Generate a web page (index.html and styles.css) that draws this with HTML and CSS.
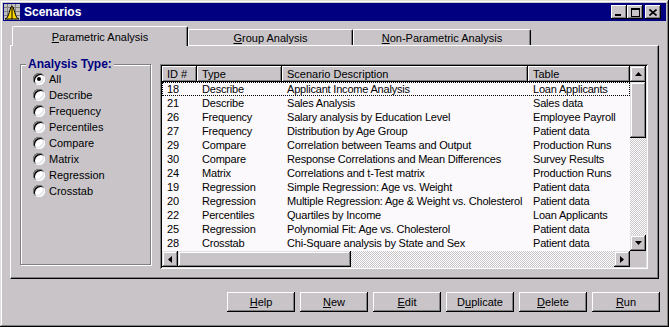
FILE: index.html
```html
<!DOCTYPE html>
<html lang="en">
<head>
    <meta charset="UTF-8">
    <title>Scenarios</title>
    <link rel="stylesheet" href="styles.css">
</head>
<body>
    <div class="window">
        <div class="titlebar">
            <svg class="app-icon" width="16" height="16" viewBox="0 0 16 16">
                <rect x="0" y="0" width="16" height="16" fill="#c0c0c0"/>
                <path d="M0 3.5h16M0 7.5h16M0 11.5h16M3.5 0v16M7.5 0v16M11.5 0v16" stroke="#808080" stroke-width="1"/>
                <path d="M1 15 C5 15 6 2 8 2 C10 2 11 15 15 15 Z" fill="#ffd800" stroke="#000" stroke-width="1"/>
                <path d="M8 3v12" stroke="#000"/>
            </svg>
            <span class="title">Scenarios</span>
            <div class="controls">
                <span class="ctl"><svg width="8" height="7" viewBox="0 0 8 7"><rect x="0" y="5" width="6" height="2" fill="#000"/></svg></span>
                <span class="ctl"><svg width="9" height="9" viewBox="0 0 9 9"><rect x="0.5" y="0.5" width="8" height="8" fill="none" stroke="#000"/><rect x="0" y="0" width="9" height="2" fill="#000"/></svg></span>
                <span class="ctl close"><svg width="8" height="7" viewBox="0 0 8 7"><path d="M0.5 0.5l7 6M7.5 0.5l-7 6" stroke="#000" stroke-width="1.6"/></svg></span>
            </div>
        </div>

        <div class="tabs">
            <div class="tab active"><span><u>P</u>arametric Analysis</span></div>
            <div class="tab tab-group"><span><u>G</u>roup Analysis</span></div>
            <div class="tab tab-non"><span><u>N</u>on-Parametric Analysis</span></div>
        </div>

        <div class="panel">
            <fieldset class="types">
                <legend>Analysis Type:</legend>
                <label class="opt"><span class="radio checked"></span>All</label>
                <label class="opt"><span class="radio"></span>Describe</label>
                <label class="opt"><span class="radio"></span>Frequency</label>
                <label class="opt"><span class="radio"></span>Percentiles</label>
                <label class="opt"><span class="radio"></span>Compare</label>
                <label class="opt"><span class="radio"></span>Matrix</label>
                <label class="opt"><span class="radio"></span>Regression</label>
                <label class="opt"><span class="radio"></span>Crosstab</label>
            </fieldset>

            <div class="listbox">
                <div class="list-main">
                    <div class="row head">
                        <div class="cell hd">ID #</div>
                        <div class="cell hd">Type</div>
                        <div class="cell hd">Scenario Description</div>
                        <div class="cell hd">Table</div>
                    </div>
                    <div id="rows"></div>
                </div>
                <div class="vscroll">
                    <span class="sbtn"><svg width="7" height="4" viewBox="0 0 7 4"><path d="M3.5 0L7 4H0Z" fill="#000"/></svg></span>
                    <span class="vthumb"></span>
                    <span class="track"></span>
                    <span class="sbtn"><svg width="7" height="4" viewBox="0 0 7 4"><path d="M0 0H7L3.5 4Z" fill="#000"/></svg></span>
                </div>
                <div class="hscroll">
                    <span class="sbtn"><svg width="4" height="7" viewBox="0 0 4 7"><path d="M0 3.5L4 0V7Z" fill="#000"/></svg></span>
                    <span class="hthumb"></span>
                    <span class="track"></span>
                    <span class="sbtn"><svg width="4" height="7" viewBox="0 0 4 7"><path d="M0 0L4 3.5L0 7Z" fill="#000"/></svg></span>
                </div>
                <div class="corner"></div>
            </div>
        </div>

        <div class="buttons">
            <button><u>H</u>elp</button>
            <button><u>N</u>ew</button>
            <button><u>E</u>dit</button>
            <button>D<u>u</u>plicate</button>
            <button><u>D</u>elete</button>
            <button><u>R</u>un</button>
        </div>
    </div>

    <script>
        let scenarios = [
            [18, 'Describe', 'Applicant Income Analysis', 'Loan Applicants'],
            [21, 'Describe', 'Sales Analysis', 'Sales data'],
            [26, 'Frequency', 'Salary analysis by Education Level', 'Employee Payroll'],
            [27, 'Frequency', 'Distribution by Age Group', 'Patient data'],
            [29, 'Compare', 'Correlation between Teams and Output', 'Production Runs'],
            [30, 'Compare', 'Response Correlations and Mean Differences', 'Survey Results'],
            [24, 'Matrix', 'Correlations and t-Test matrix', 'Production Runs'],
            [19, 'Regression', 'Simple Regression: Age vs. Weight', 'Patient data'],
            [20, 'Regression', 'Multiple Regression: Age & Weight vs. Cholesterol', 'Patient data'],
            [22, 'Percentiles', 'Quartiles by Income', 'Loan Applicants'],
            [25, 'Regression', 'Polynomial Fit: Age vs. Cholesterol', 'Patient data'],
            [28, 'Crosstab', 'Chi-Square analysis by State and Sex', 'Patient data']
        ];

        let rows = document.getElementById('rows');
        for (let i = 0; i < scenarios.length; i++) {
            let row = document.createElement('div');
            row.className = i === 0 ? 'row focus' : 'row';
            for (let j = 0; j < 4; j++) {
                let cell = document.createElement('div');
                cell.className = 'cell';
                cell.innerText = scenarios[i][j];
                row.appendChild(cell);
            }
            rows.appendChild(row);
        }
    </script>
</body>
</html>
```

FILE: styles.css
```css
body {
    margin: 0;
    background: #c8c4c8;
    font-family: "Liberation Sans", Arial, sans-serif;
    font-size: 11px;
    color: #000;
}
.window {
    width: 669px;
    height: 327px;
    box-sizing: border-box;
    padding: 3px;
    background: #c8c4c8;
    box-shadow: inset -1px -1px #000, inset 1px 1px #dfdfdf, inset -2px -2px #808080, inset 2px 2px #fff;
}
.titlebar {
    height: 18px;
    background: #000080;
    display: flex;
    align-items: center;
    padding-left: 1px;
}
.app-icon {
    margin-right: 4px;
}
.title {
    color: #fff;
    font-weight: bold;
    font-size: 12px;
}
.controls {
    margin-left: auto;
    display: flex;
    margin-right: 5px;
}
.ctl {
    width: 16px;
    height: 14px;
    box-sizing: border-box;
    background: #c8c4c8;
    box-shadow: inset -1px -1px #000, inset 1px 1px #fff, inset -2px -2px #808080;
    display: flex;
    align-items: center;
    justify-content: center;
}
.ctl.close {
    margin-left: 2px;
}
.tabs {
    display: flex;
    align-items: flex-end;
    height: 19px;
    margin: 5px 0 0 9px;
    position: relative;
    z-index: 1;
}
.tab {
    height: 16px;
    box-sizing: border-box;
    border-left: 1px solid #fff;
    border-top: 1px solid #fff;
    border-right: 1px solid #000;
    border-radius: 2px 2px 0 0;
    box-shadow: inset -1px 0 #808080;
    display: flex;
    align-items: center;
    justify-content: center;
    width: 165px;
}
.tab.active {
    width: 176px;
    height: 20px;
    margin-bottom: -1px;
    background: #c8c4c8;
}
.tab-non {
    width: 178px;
}
.panel {
    margin-left: 7px;
    width: 649px;
    height: 234px;
    box-sizing: border-box;
    border-left: 1px solid #fff;
    border-top: 1px solid #fff;
    border-right: 1px solid #000;
    border-bottom: 1px solid #000;
    box-shadow: inset -1px -1px #808080;
    display: flex;
    align-items: flex-start;
    padding: 12px 0 0 9px;
}
.types {
    margin: 0;
    width: 131px;
    height: 207px;
    box-sizing: border-box;
    border: 1px solid #808080;
    box-shadow: inset 1px 1px #fff, 1px 1px #fff;
    padding: 0 0 0 12px;
    display: flex;
    flex-direction: column;
}
.types legend {
    color: #000080;
    font-weight: bold;
    font-size: 12px;
    line-height: 13px;
    padding: 0 2px;
    margin-left: -7px;
    background: #c8c4c8;
}
.opt {
    display: flex;
    align-items: center;
    height: 16px;
    font-size: 11px;
}
.radio {
    width: 12px;
    height: 12px;
    border-radius: 50%;
    background: #fff;
    box-shadow: inset 1px 1px #808080, inset -1px -1px #fff, inset 2px 2px #000, inset -2px -2px #dfdfdf;
    margin-right: 4px;
    display: flex;
    align-items: center;
    justify-content: center;
}
.radio.checked::after {
    content: "";
    width: 4px;
    height: 4px;
    border-radius: 50%;
    background: #000;
}
.listbox {
    margin: 6px 0 0 9px;
    width: 488px;
    height: 205px;
    box-sizing: border-box;
    padding: 2px;
    background: #fcf9fc;
    box-shadow: inset 1px 1px #808080, inset -1px -1px #fff, inset 2px 2px #000, inset -2px -2px #dfdfdf;
    display: grid;
    grid-template-columns: 468px 16px;
    grid-template-rows: 185px 16px;
}
.list-main {
    overflow: hidden;
}
.row {
    display: grid;
    grid-template-columns: 35px 85px 246px 102px;
    height: 14px;
    align-items: center;
    box-sizing: border-box;
    letter-spacing: -0.2px;
}
.row.head {
    height: 16px;
    letter-spacing: 0;
}
.row.focus {
    outline: 1px dotted #000;
    outline-offset: -1px;
}
.cell {
    padding-left: 5px;
    white-space: nowrap;
    overflow: hidden;
}
.cell.hd {
    height: 16px;
    line-height: 16px;
    background: #c8c4c8;
    box-shadow: inset -1px -1px #000, inset 1px 1px #fff, inset -2px -2px #808080;
}
.vscroll, .hscroll {
    display: flex;
    background: repeating-conic-gradient(#c8c4c8 0 25%, #fff 0 50%) 0 0 / 2px 2px;
}
.vscroll {
    flex-direction: column;
}
.sbtn, .vthumb, .hthumb {
    background: #c8c4c8;
    box-shadow: inset -1px -1px #000, inset 1px 1px #dfdfdf, inset -2px -2px #808080, inset 2px 2px #fff;
    flex: none;
}
.sbtn {
    width: 16px;
    height: 16px;
    display: flex;
    align-items: center;
    justify-content: center;
}
.vthumb {
    height: 56px;
}
.hthumb {
    width: 173px;
}
.track {
    flex: 1;
}
.corner {
    background: #c8c4c8;
}
.buttons {
    display: flex;
    justify-content: flex-end;
    gap: 5px;
    margin: 13px 6px 0 0;
}
.buttons button {
    width: 68px;
    height: 20px;
    border: none;
    background: #c8c4c8;
    font-family: "Liberation Sans", Arial, sans-serif;
    font-size: 11px;
    color: #000;
    padding: 0;
    box-shadow: inset -1px -1px #000, inset 1px 1px #fff, inset -2px -2px #808080;
}
```
